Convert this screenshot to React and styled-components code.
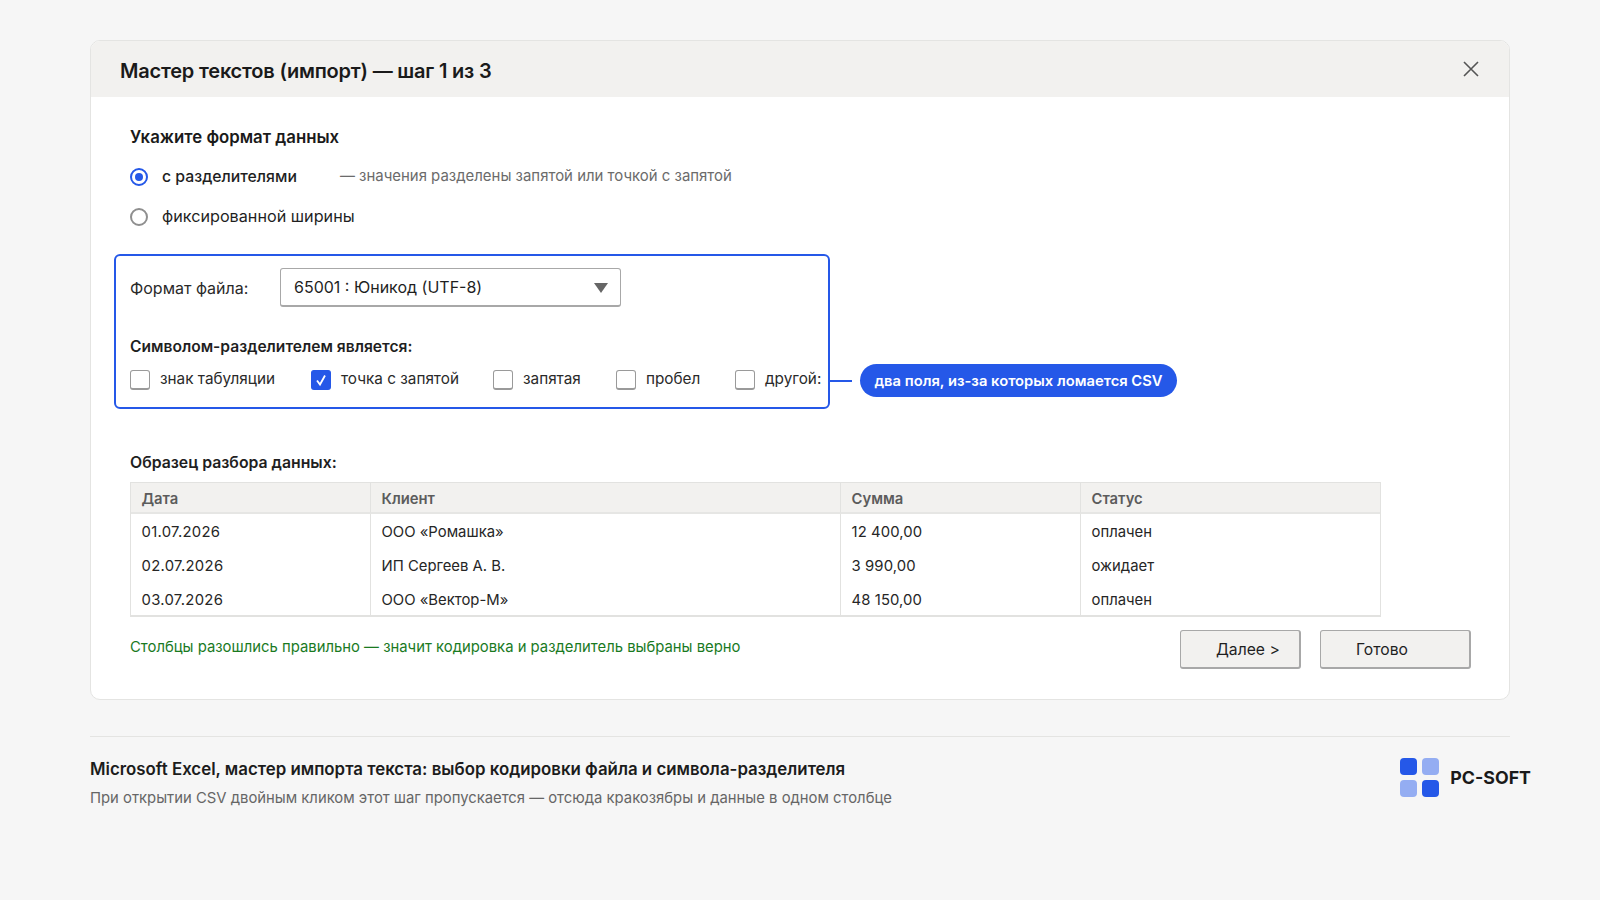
import React from "react";
import styled, { createGlobalStyle } from "styled-components";

const Global = createGlobalStyle`
  html, body { margin: 0; padding: 0; background: #f6f6f6; }
  body { font-family: Inter, "Noto Sans", "Liberation Sans", sans-serif; color: #1a1a1a; }
  * { box-sizing: border-box; }
`;
const Page = styled.div`width: 1600px; height: 900px; padding: 40px 90px 0; overflow: hidden;`;
const Dialog = styled.section`
  height: 660px; background: #fff; border: 1px solid #e4e4e2; border-radius: 10px; overflow: hidden;
`;
const TitleBar = styled.header`
  height: 56px; background: #f2f1ef; display: flex; align-items: center; justify-content: space-between;
  padding: 4px 29px 0 29px;
`;
const Title = styled.h1`margin: 0; font-size: 20px; font-weight: 600; letter-spacing: -0.2px; color: #1a1a1a;`;
const CloseIcon = styled.svg`width: 18px; height: 18px; margin-top: -4px; stroke: #555; stroke-width: 1.6; fill: none;`;
const Body = styled.div`padding: 28px 39px 0 39px;`;
const Heading = styled.h2`margin: 0 0 16px; font-size: 16.8px; line-height: 24px; font-weight: 600;`;
const RadioRow = styled.div`display: flex; align-items: center; height: 24px; margin-bottom: 16px;`;
const Radio = styled.span`
  width: 18px; height: 18px; border-radius: 50%; flex: none; display: flex; align-items: center; justify-content: center;
  border: 2px solid ${p => (p.$on ? "#2558e8" : "#8f8f8f")};
  &::after { content: ""; width: 8px; height: 8px; border-radius: 50%; background: ${p => (p.$on ? "#2558e8" : "transparent")}; }
`;
const RadioLabel = styled.span`margin: ${p => (p.$on ? -1 : -2)}px 0 0 14px; font-size: ${p => (p.$on ? 15.8 : 16.2)}px; font-weight: ${p => (p.$on ? 500 : 400)}; color: #1f1f1f;`;
const Hint = styled.span`margin: -3px 0 0 43px; font-size: 14.95px; color: #6b6b6b;`;
const GroupRow = styled.div`display: flex; align-items: flex-end; margin: 25px 0 0 -16px;`;
const Group = styled.div`
  width: 716px; height: 155px; border: 2px solid #2558e8; border-radius: 6px; padding: 12px 0 0 14px;
`;
const FormatRow = styled.div`display: flex; align-items: center;`;
const FieldLabel = styled.span`width: 150px; font-size: 16px; color: #2a2a2a;`;
const Select = styled.div`
  width: 341px; height: 39px; border: 1px solid #a8a8a8; border-bottom-width: 2px; border-radius: 3px; background: #fff;
  display: flex; align-items: center; justify-content: space-between; padding: 0 12px 0 13px; font-size: 16px; color: #1f1f1f;
`;
const Arrow = styled.span`
  width: 0; height: 0; border-left: 7.5px solid transparent; border-right: 7.5px solid transparent; border-top: 10px solid #666; margin-top: 2px;
`;
const SubHeading = styled.h3`margin: 0; font-size: ${p => p.$size || 15.6}px; line-height: 20px; font-weight: 600; color: #1f1f1f;`;
const DelimHeading = styled(SubHeading)`margin-top: 30px;`;
const Checks = styled.div`display: flex; margin-top: 13px;`;
const CheckItem = styled.div`display: flex; align-items: center; width: ${p => p.$w}px;`;
const Box = styled.span`
  width: 20px; height: 20px; flex: none; border-radius: 3px; display: flex; align-items: center; justify-content: center;
  border: 1px solid ${p => (p.$on ? "#2558e8" : "#9a9a9a")}; border-bottom-width: 2px;
  background: ${p => (p.$on ? "#2558e8" : "#fff")};
`;
const CheckLabel = styled.span`margin-left: 10px; font-size: 15.3px; color: #2a2a2a; margin-top: -3px; white-space: nowrap;`;
const Connector = styled.span`width: 22px; height: 2px; background: #2558e8; margin-bottom: 27px; flex: none;`;
const Pill = styled.span`
  margin-left: 8px; margin-bottom: 12px; height: 33px; width: 317px; border-radius: 17px; background: #2558e8; color: #fff;
  font-size: 14.75px; font-weight: 600; display: flex; align-items: center; justify-content: center; white-space: nowrap;
`;
const SampleHeading = styled(SubHeading)`margin-top: 44px;`;
const Table = styled.div`
  width: 1251px; margin-top: 9px; border: 1px solid #e2e2e0; border-bottom-width: 2px;
  display: grid; grid-template-columns: 239px 470px 240px 1fr;
`;
const Th = styled.div`
  height: 31px; background: #f2f1ef; border-bottom: 2px solid #e6e6e4; border-left: ${p => (p.$first ? "none" : "1px solid #e2e2e0")};
  padding: 2px 10.5px 0; display: flex; align-items: center; font-size: 14.8px; font-weight: 600; color: #5c5c5c;
`;
const Td = styled.div`
  height: ${p => p.$h}px; border-left: ${p => (p.$first ? "none" : "1px solid #e2e2e0")};
  padding: 2px 10.5px 0; display: flex; align-items: center; font-size: 14.85px; color: #262626;
  letter-spacing: ${p => p.$ls}px;
`;
const BottomRow = styled.div`display: flex; justify-content: space-between; align-items: flex-start; margin-top: 13px; width: 1341px;`;
const Ok = styled.p`margin: 6px 0 0; font-size: 14.85px; line-height: 22px; color: #1a7a1f;`;
const Buttons = styled.div`display: flex; gap: 19px;`;
const Btn = styled.button`
  width: ${p => p.$w}px; height: 39px; background: #f2f1ef; border: 1px solid #a8a8a8; border-bottom-width: 2px; border-right-width: 2px;
  border-radius: 3px; padding: 0 0 0 35px; text-align: left; font: 400 15.7px Inter, sans-serif; color: #1f1f1f;
`;
const Caption = styled.footer`
  margin: 36px -21px 0 0; position: relative; display: flex; justify-content: space-between; padding-top: 21px;
  &::before { content: ""; position: absolute; left: 0; top: 0; width: 1420px; height: 1px; background: #e4e4e2; }
`;
const CaptionTitle = styled.h4`margin: 0; font-size: 16.85px; line-height: 24px; font-weight: 600; color: #1c1c1c;`;
const CaptionSub = styled.p`margin: 6px 0 0; font-size: 14.83px; line-height: 22px; color: #666;`;
const Brand = styled.div`display: flex; align-items: center; gap: 11px; height: 40px;`;
const BrandGrid = styled.div`display: grid; grid-template-columns: 17px 17px; gap: 5px;`;
const Tile = styled.span`width: 17px; height: 17px; border-radius: 4px; background: ${p => (p.$on ? "#2558e8" : "#94adf2")};`;
const BrandName = styled.span`font-size: 17.8px; font-weight: 700; color: #1a1a1a;`;

const rows = [
  ["01.07.2026", "ООО «Ромашка»", "12 400,00", "оплачен"],
  ["02.07.2026", "ИП Сергеев А. В.", "3 990,00", "ожидает"],
  ["03.07.2026", "ООО «Вектор-М»", "48 150,00", "оплачен"],
];
const spacing = [0.3, 0, 0.1, 0];
const checks = [
  ["знак табуляции", 181, false],
  ["точка с запятой", 182, true],
  ["запятая", 123, false],
  ["пробел", 119, false],
  ["другой:", 90, false],
];

export default function App() {
  return (
    <Page>
      <Global />
      <Dialog>
        <TitleBar>
          <Title>Мастер текстов (импорт) — шаг 1 из 3</Title>
          <CloseIcon viewBox="0 0 18 18"><path d="M2 2l14 14M16 2L2 16" /></CloseIcon>
        </TitleBar>
        <Body>
          <Heading>Укажите формат данных</Heading>
          <RadioRow>
            <Radio $on />
            <RadioLabel $on>с разделителями</RadioLabel>
            <Hint>— значения разделены запятой или точкой с запятой</Hint>
          </RadioRow>
          <RadioRow>
            <Radio />
            <RadioLabel>фиксированной ширины</RadioLabel>
          </RadioRow>
          <GroupRow>
            <Group>
              <FormatRow>
                <FieldLabel>Формат файла:</FieldLabel>
                <Select>65001 : Юникод (UTF-8)<Arrow /></Select>
              </FormatRow>
              <DelimHeading>Символом-разделителем является:</DelimHeading>
              <Checks>
                {checks.map(([label, w, on]) => (
                  <CheckItem key={label} $w={w}>
                    <Box $on={on}>
                      {on && (
                        <svg width="14" height="14" viewBox="0 0 14 14" fill="none" stroke="#fff" strokeWidth="1.8">
                          <path d="M3 7.5l3 4 5-9" />
                        </svg>
                      )}
                    </Box>
                    <CheckLabel>{label}</CheckLabel>
                  </CheckItem>
                ))}
              </Checks>
            </Group>
            <Connector />
            <Pill>два поля, из-за которых ломается CSV</Pill>
          </GroupRow>
          <SampleHeading $size={15.8}>Образец разбора данных:</SampleHeading>
          <Table>
            {["Дата", "Клиент", "Сумма", "Статус"].map((h, i) => (
              <Th key={h} $first={i === 0}>{h}</Th>
            ))}
            {rows.map((r, ri) =>
              r.map((c, i) => (
                <Td key={ri + "-" + i} $first={i === 0} $ls={spacing[i]} $h={ri === 2 ? 33 : 34}>{c}</Td>
              ))
            )}
          </Table>
          <BottomRow>
            <Ok>Столбцы разошлись правильно — значит кодировка и разделитель выбраны верно</Ok>
            <Buttons>
              <Btn $w={121}>Далее &gt;</Btn>
              <Btn $w={151}>Готово</Btn>
            </Buttons>
          </BottomRow>
        </Body>
      </Dialog>
      <Caption>
        <div>
          <CaptionTitle>Microsoft Excel, мастер импорта текста: выбор кодировки файла и символа-разделителя</CaptionTitle>
          <CaptionSub>При открытии CSV двойным кликом этот шаг пропускается — отсюда кракозябры и данные в одном столбце</CaptionSub>
        </div>
        <Brand>
          <BrandGrid>
            <Tile $on /><Tile /><Tile /><Tile $on />
          </BrandGrid>
          <BrandName>PC-SOFT</BrandName>
        </Brand>
      </Caption>
    </Page>
  );
}
